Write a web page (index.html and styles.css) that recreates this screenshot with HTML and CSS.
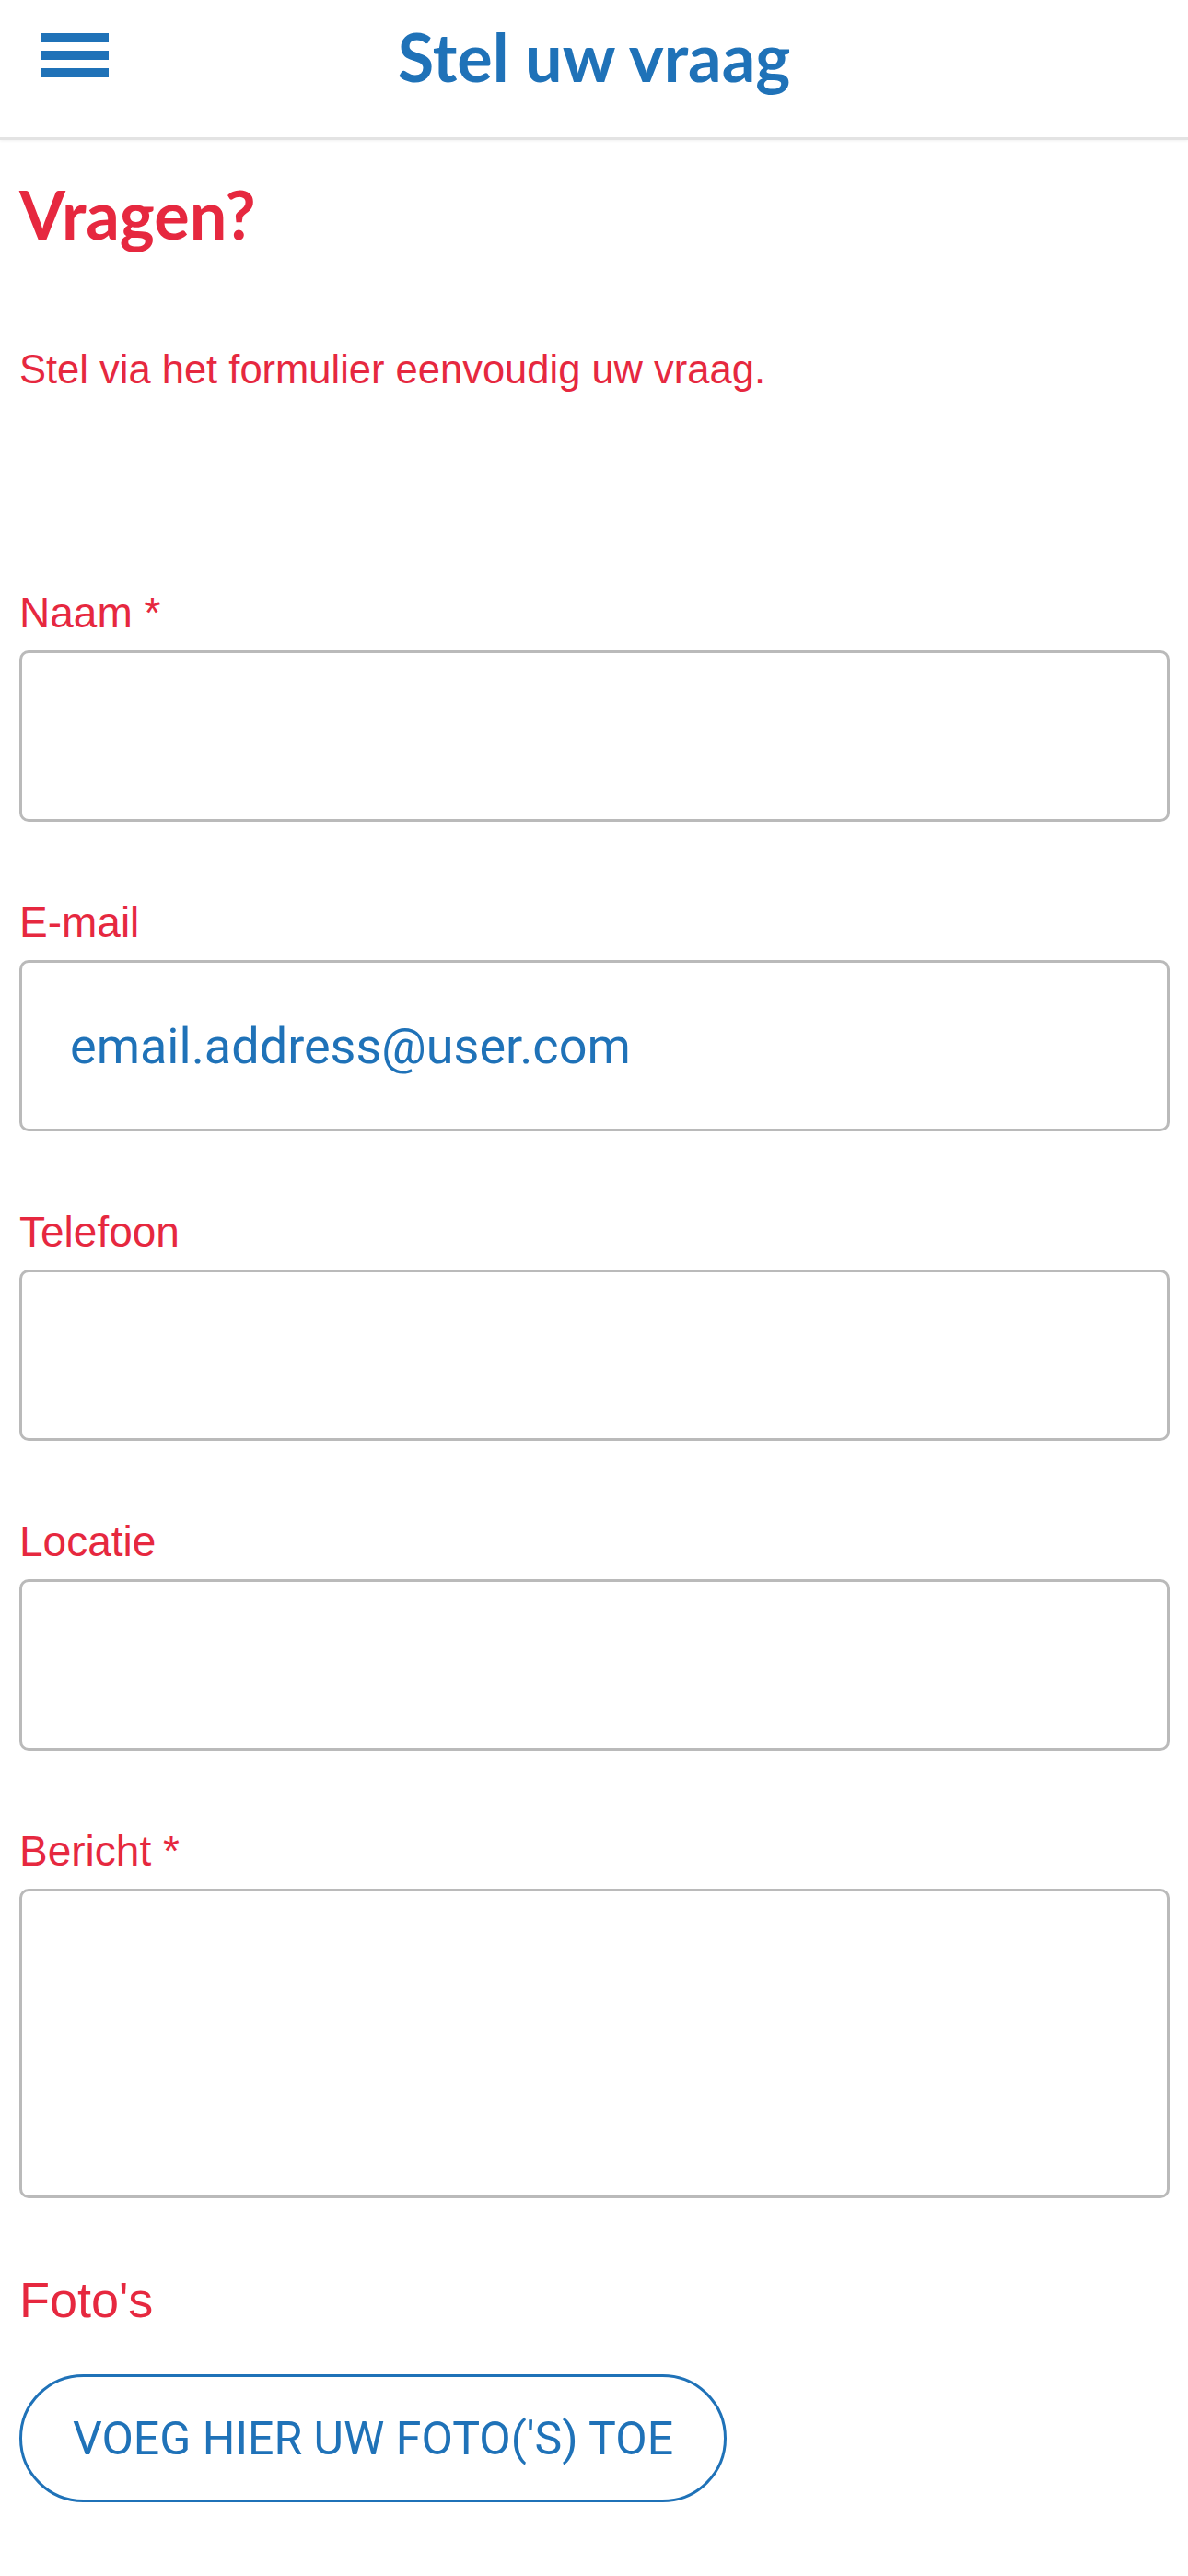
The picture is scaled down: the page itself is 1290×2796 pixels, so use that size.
FILE: index.html
```html
<!DOCTYPE html>
<html lang="nl">
<head>
<meta charset="utf-8">
<title>Stel uw vraag</title>
<link rel="stylesheet" href="styles.css">
</head>
<body>
<header class="topbar">
  <button class="menu-btn" aria-label="Menu">
    <span class="bar"></span>
    <span class="bar"></span>
    <span class="bar"></span>
  </button>
  <div class="topbar-title">Stel uw vraag</div>
  <div class="spacer"></div>
</header>
<main class="page">
  <h1 class="heading">Vragen?</h1>
  <p class="intro">Stel via het formulier eenvoudig uw vraag.</p>
  <form class="form">
    <div class="field">
      <label class="label">Naam *</label>
      <input class="input" type="text">
    </div>
    <div class="field">
      <label class="label">E-mail</label>
      <input class="input" type="email" value="email.address@user.com">
    </div>
    <div class="field">
      <label class="label">Telefoon</label>
      <input class="input" type="tel">
    </div>
    <div class="field">
      <label class="label">Locatie</label>
      <input class="input" type="text">
    </div>
    <div class="field">
      <label class="label">Bericht *</label>
      <textarea class="input textarea"></textarea>
    </div>
    <div class="photos">
      <div class="photos-label">Foto's</div>
      <button type="button" class="upload-btn">VOEG HIER UW FOTO('S) TOE</button>
    </div>
  </form>
</main>
</body>
</html>
```

FILE: styles.css
```css
html, body {
  margin: 0;
  padding: 0;
  background: #ffffff;
}

body {
  font-family: "Liberation Sans", Arial, sans-serif;
  width: 1290px;
}

.topbar {
  height: 149px;
  box-sizing: content-box;
  display: grid;
  grid-template-columns: 1fr auto 1fr;
  align-items: start;
  border-bottom: 3px solid #e3e3e3;
  box-shadow: 0 1px 3px rgba(0, 0, 0, 0.06);
}

.menu-btn {
  margin: 36px 0 0 44px;
  padding: 0;
  border: 0;
  background: none;
  width: 74px;
  display: flex;
  flex-direction: column;
  gap: 9px;
  justify-self: start;
}

.bar {
  display: block;
  width: 74px;
  height: 10px;
  background: #1f72b8;
}

.topbar-title {
  font-family: Lato, "Open Sans", sans-serif;
  font-weight: 700;
  font-size: 72px;
  line-height: 1.2;
  padding-top: 18px;
  color: #1f72b8;
  white-space: nowrap;
}

.page {
  padding: 0 20px 0 21px;
}

.heading {
  margin: 37px 0 0;
  font-family: Lato, "Open Sans", sans-serif;
  font-weight: 700;
  font-size: 72px;
  line-height: 1.2;
  color: #e6283f;
}

.intro {
  margin: 101px 0 0;
  font-size: 43.5px;
  line-height: 50px;
  color: #e6283f;
}

.form {
  margin-top: 213px;
  display: flex;
  flex-direction: column;
  gap: 83px;
}

.field {
  display: flex;
  flex-direction: column;
  gap: 14px;
}

.label {
  font-size: 46px;
  line-height: 53px;
  color: #e6283f;
}

.input {
  display: block;
  box-sizing: border-box;
  width: 100%;
  height: 186px;
  margin: 0;
  padding: 0 52px;
  border: 3px solid #bababa;
  border-radius: 10px;
  background: #ffffff;
  font-family: Roboto, "Liberation Sans", sans-serif;
  font-size: 54px;
  color: #1f72b8;
  outline: none;
  -webkit-appearance: none;
  appearance: none;
}

.textarea {
  height: 336px;
  resize: none;
  padding-top: 40px;
}

.photos {
  margin-top: -4px;
  display: flex;
  flex-direction: column;
  align-items: flex-start;
  gap: 50px;
}

.photos-label {
  font-size: 54px;
  line-height: 62px;
  color: #e6283f;
}

.upload-btn {
  box-sizing: border-box;
  height: 139px;
  width: 768px;
  margin: 0;
  padding: 0;
  border: 3px solid #1f72b8;
  border-radius: 70px;
  background: #ffffff;
  font-family: Roboto, "Liberation Sans", sans-serif;
  font-size: 50px;
  line-height: 60px;
  color: #1f72b8;
  text-align: center;
}
```
